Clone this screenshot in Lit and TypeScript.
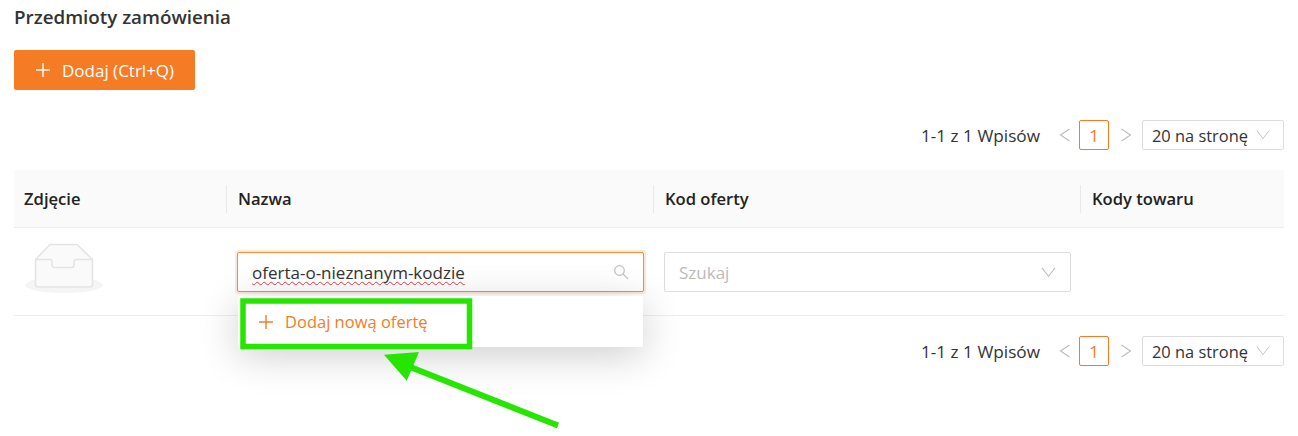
import { LitElement, html, css, svg } from 'lit';
import { customElement } from 'lit/decorators.js';

const chevron = (dir: 'left' | 'right' | 'down', size = 16) => {
  const d = dir === 'left' ? 'M12.5 2 3.500 8l9 6' : dir === 'right' ? 'M3.500 2l9 6-9 6' : 'M1 3l7 9 7-9';
  return html`<svg class="chev" width=${size} height=${size} viewBox="0 0 16 16" fill="none" stroke="currentColor" stroke-width="1.1">${svg`<path d=${d}></path>`}</svg>`;
};

const plus = html`<svg width="16" height="16" viewBox="0 0 16 16" stroke="currentColor" stroke-width="1.4">${svg`<path d="M8 1v14M1 8h14"></path>`}</svg>`;

@customElement('app-root')
export class AppRoot extends LitElement {
  static styles = css`
    :host {
      display: block;
      position: relative;
      height: 436px;
      overflow: hidden;
      background: #fff;
      padding: 0 14px;
      box-sizing: border-box;
      color: #333;
      font-family: 'Open Sans', 'Noto Sans', sans-serif;
      font-size: 17px;
    }

    h1 {
      margin: 0;
      padding-top: 4px;
      height: 50px;
      box-sizing: border-box;
      font-size: 18.8px;
      line-height: 26px;
      font-weight: 600;
    }

    .add {
      display: inline-flex;
      align-items: center;
      gap: 11px;
      height: 40px;
      width: 181px;
      box-sizing: border-box;
      padding-left: 21px;
      border-radius: 2px;
      background: #f57c24;
      color: #fff;
      vertical-align: top;
    }

    .pager {
      display: flex;
      justify-content: flex-end;
      align-items: center;
      height: 30px;
    }

    .pager-top {
      margin-top: 30px;
      margin-bottom: 20px;
    }

    .pager-bottom {
      margin-top: 20px;
    }

    .count {
      margin-right: 17px;
      font-size: 17.2px;
    }

    .pager .chev {
      color: #bbb;
    }

    .page {
      width: 30px;
      height: 30px;
      margin: 0 9px 0 6px;
      box-sizing: border-box;
      display: flex;
      align-items: center;
      justify-content: center;
      border: 1px solid #f57c24;
      border-radius: 2px;
      color: #f57c24;
    }

    .size {
      display: flex;
      align-items: center;
      justify-content: space-between;
      width: 142px;
      height: 30px;
      margin-left: 8px;
      padding: 0 13px 0 9px;
      box-sizing: border-box;
      border: 1px solid #ddd;
      border-radius: 2px;
      font-size: 16.4px;
    }

    .pager .size .chev {
      color: #c4c4c4;
    }

    .row {
      display: grid;
      grid-template-columns: 213px 427px 427px 1fr;
    }

    .head {
      height: 58px;
      background: #fafafa;
      border-bottom: 1px solid #eee;
      box-sizing: border-box;
      align-items: center;
      font-size: 16.6px;
      font-weight: 600;
      color: #222;
    }

    .head > div {
      height: 28px;
      line-height: 28px;
      margin-left: -1px;
      padding-left: 11px;
      border-left: 1px solid #e8e8e8;
    }

    .head > div:first-child {
      margin-left: 0;
      padding-left: 10px;
      border-left: 0;
    }

    .body {
      height: 88px;
      box-sizing: border-box;
      border-bottom: 1px solid #eee;
    }

    .photo {
      padding: 15px 0 0 11px;
    }

    .cell {
      position: relative;
      padding: 24px 10px 0;
    }

    .field {
      display: flex;
      align-items: center;
      justify-content: space-between;
      height: 40px;
      box-sizing: border-box;
      padding: 0 14px;
      border: 1px solid #ddd;
      border-radius: 2px;
    }

    .field.active {
      border-color: #f58b3f;
      box-shadow: 0 0 0 2px rgba(245, 124, 36, 0.18);
    }

    .typed {
      text-decoration: underline wavy #e8394a 1.3px;
      text-decoration-skip-ink: none;
      text-underline-offset: 2px;
    }

    .placeholder {
      color: #bbb;
    }

    .field .chev {
      color: #bbb;
    }

    .menu {
      position: absolute;
      left: 11px;
      top: 68px;
      width: 405px;
      height: 51px;
      z-index: 1;
      display: flex;
      align-items: center;
      gap: 11px;
      box-sizing: border-box;
      padding-left: 20px;
      background: #fff;
      border-radius: 2px;
      color: #f57c24;
      font-size: 16.5px;
      box-shadow: 0 8px 40px rgba(0, 0, 0, 0.2);
    }

    .marks {
      position: absolute;
      inset: 0;
      z-index: 2;
      pointer-events: none;
    }
  `;

  private pager(cls: string) {
    return html`
      <div class="pager ${cls}">
        <span class="count">1-1 z 1 Wpisów</span>
        ${chevron('left')}
        <span class="page">1</span>
        ${chevron('right')}
        <span class="size">20 na stronę ${chevron('down', 14)}</span>
      </div>
    `;
  }

  render() {
    return html`
      <h1>Przedmioty zamówienia</h1>
      <div class="add">${plus}<span>Dodaj (Ctrl+Q)</span></div>
      ${this.pager('pager-top')}
      <div class="row head">
        <div>Zdjęcie</div>
        <div>Nazwa</div>
        <div>Kod oferty</div>
        <div>Kody towaru</div>
      </div>
      <div class="row body">
        <div class="photo">
          <svg width="78" height="50" viewBox="0 0 78 50">
            <ellipse cx="39" cy="42" rx="39" ry="8" fill="#f5f5f5"></ellipse>
            <path d="M10.500 16.500 25 1.500h27l15.500 15V41a3 3 0 0 1-3 3h-51a3 3 0 0 1-3-3z" fill="#fafafa" stroke="#e4e4e4" stroke-width="1.500"></path>
            <path d="M10.500 16.500H25c1.500 0 2 1 2 2.500v3c0 1.500 .8 2.500 2.500 2.500h17c1.700 0 2.500-1 2.500-2.500v-3c0-1.500 .5-2.500 2-2.500h16.500" fill="none" stroke="#e4e4e4" stroke-width="1.500"></path>
          </svg>
        </div>
        <div class="cell">
          <div class="field active">
            <span class="typed">oferta-o-nieznanym-kodzie</span>
            <svg width="16" height="16" viewBox="0 0 16 16" fill="none" stroke="#c4c4c4" stroke-width="1.300">
              <circle cx="6.500" cy="6.500" r="4.800"></circle>
              <path d="m10 10 5 5"></path>
            </svg>
          </div>
          <div class="menu">${plus}<span>Dodaj nową ofertę</span></div>
        </div>
        <div class="cell">
          <div class="field">
            <span class="placeholder">Szukaj</span>
            ${chevron('down', 15)}
          </div>
        </div>
        <div></div>
      </div>
      ${this.pager('pager-bottom')}
      <svg class="marks" width="1298" height="436" viewBox="0 0 1298 436">
        <rect x="243" y="301" width="226.500" height="45.500" fill="none" stroke="#26e600" stroke-width="5.500"></rect>
        <path d="M384 354.700 419 352 406.700 380.700z" fill="#26e600"></path>
        <path d="M411.500 367.500 558 425.500" fill="none" stroke="#26e600" stroke-width="6"></path>
      </svg>
    `;
  }
}

declare global {
  interface HTMLElementTagNameMap {
    'app-root': AppRoot;
  }
}
